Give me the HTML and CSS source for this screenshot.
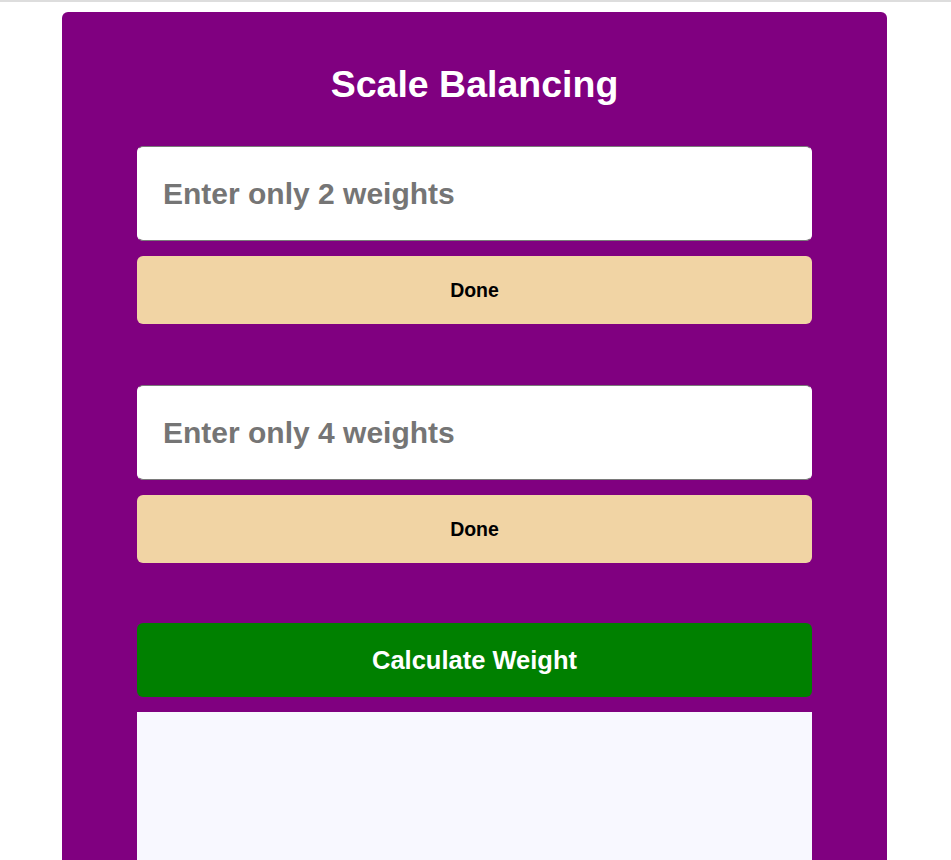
FILE: index.html
```html
<!DOCTYPE html>
<html>
<head>
<meta charset="utf-8">
<link rel="stylesheet" href="styles.css">
</head>
<body>
<div class="topline"></div>
<div class="card">
  <h1 class="title">Scale Balancing</h1>
  <div class="group">
    <input class="weights" type="text" placeholder="Enter only 2 weights">
    <button class="done">Done</button>
  </div>
  <div class="group">
    <input class="weights" type="text" placeholder="Enter only 4 weights">
    <button class="done">Done</button>
  </div>
  <button class="calc">Calculate Weight</button>
  <div class="result"></div>
</div>
</body>
</html>
```
FILE: styles.css
```css
html, body {
  margin: 0;
  padding: 0;
  background: #ffffff;
  font-family: "Liberation Sans", Arial, sans-serif;
  overflow: hidden;
}
.topline {
  height: 2px;
  background: #dddddd;
}
.card {
  width: 825px;
  margin: 10px 0 0 62px;
  background: #800080;
  border-radius: 6px;
  padding: 0 75px 40px;
  box-sizing: border-box;
  display: flex;
  flex-direction: column;
}
.title {
  margin: 0;
  padding: 51px 0 41px;
  text-align: center;
  color: #ffffff;
  font-size: 37.5px;
  line-height: 42px;
  font-weight: bold;
}
.group {
  display: flex;
  flex-direction: column;
  gap: 15px;
  margin-bottom: 61px;
}
.group + .group {
  margin-bottom: 60px;
}
.weights {
  height: 95px;
  box-sizing: border-box;
  border: 1px solid #7a7a7a;
  border-left-color: #ffffff;
  border-right-color: #ffffff;
  border-radius: 6px;
  padding: 0 25px;
  background: #ffffff;
  font-family: "Liberation Sans", Arial, sans-serif;
  font-size: 30px;
  font-weight: bold;
  outline: none;
}
.weights::placeholder {
  color: #757575;
}
.done {
  height: 68px;
  border: none;
  border-radius: 6px;
  background: #f1d4a4;
  color: #000000;
  font-family: "Liberation Sans", Arial, sans-serif;
  font-size: 19.5px;
  font-weight: bold;
}
.calc {
  height: 74px;
  border: none;
  border-radius: 6px;
  background: #008000;
  color: #ffffff;
  font-family: "Liberation Sans", Arial, sans-serif;
  font-size: 25.5px;
  font-weight: bold;
}
.result {
  margin-top: 15px;
  height: 200px;
  background: #f8f8ff;
}
```
